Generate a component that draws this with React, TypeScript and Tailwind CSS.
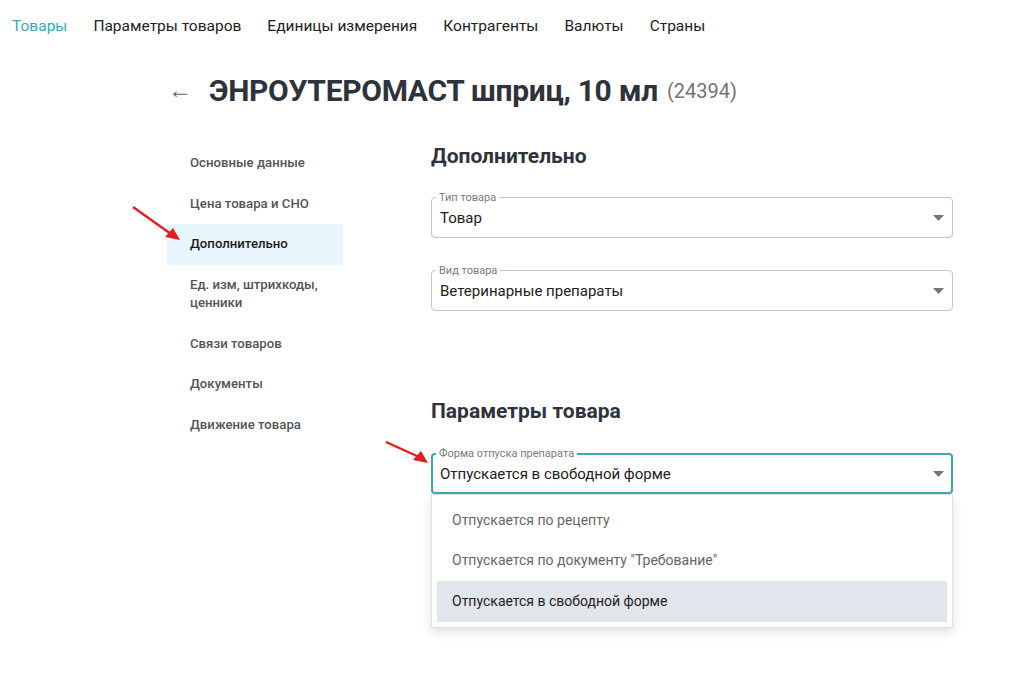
import { useState } from "react";

const tabs = ["Товары", "Параметры товаров", "Единицы измерения", "Контрагенты", "Валюты", "Страны"];

const sections = [
  "Основные данные",
  "Цена товара и СНО",
  "Дополнительно",
  "Ед. изм, штрихкоды, ценники",
  "Связи товаров",
  "Документы",
  "Движение товара",
];

const options = [
  "Отпускается по рецепту",
  'Отпускается по документу "Требование"',
  "Отпускается в свободной форме",
];

function Caret() {
  return (
    <svg width="11" height="6" viewBox="0 0 11 6" className="shrink-0">
      <path d="M0 0h11L5.5 6z" fill="#757575" />
    </svg>
  );
}

function SelectField({
  label,
  value,
  focused,
}: {
  label: string;
  value: string;
  focused?: boolean;
}) {
  return (
    <div
      className={`relative flex h-[41px] items-center justify-between rounded-[4px] ${
        focused ? "border-2 border-[#3aa9b7] pl-[7px] pr-[7px]" : "border border-[#c6c6c6] pl-[8px] pr-[8px]"
      }`}
    >
      <span
        className={`absolute bg-white px-[3px] text-[11px] leading-[12px] text-[#7a7a7a] ${
          focused ? "-top-[7px] left-[3px]" : "-top-[6px] left-[4px]"
        }`}
      >
        {label}
      </span>
      <span className="mt-[2px] text-[15px] text-[#222]">{value}</span>
      <Caret />
    </div>
  );
}

function RedArrow({ w, h, className }: { w: number; h: number; className: string }) {
  return (
    <svg
      width={w}
      height={h}
      viewBox={`0 0 ${w} ${h}`}
      className={`pointer-events-none absolute ${className}`}
    >
      <line x1="1" y1="1" x2={w - 9} y2={h - 6} stroke="#e41e1e" strokeWidth="2.4" />
      <path
        d={`M${w} ${h} L${w - 15} ${h - 3} L${w - 7} ${h - 12} Z`}
        fill="#e41e1e"
      />
    </svg>
  );
}

export default function App() {
  const [active, setActive] = useState(2);
  const [open, setOpen] = useState(true);

  return (
    <div
      className="relative h-[685px] w-[1025px] overflow-hidden bg-white"
      style={{ fontFamily: "Roboto, 'Liberation Sans', sans-serif" }}
    >
      {/* Tabs */}
      <nav className="flex h-[54px] items-center gap-[26px] px-[12px] text-[15.5px]">
        {tabs.map((t, i) => (
          <span key={t} className={i === 0 ? "text-[#3aa7b8]" : "text-[#222]"}>
            {t}
          </span>
        ))}
      </nav>

      {/* Title */}
      <div className="mt-[18px] flex h-[36px] items-center pl-[168px]">
        <span className="mr-[17px] text-[24px] leading-none text-[#666]">←</span>
        <h1 className="text-[30px] font-bold tracking-[-0.3px] text-[#2e333b]">
          ЭНРОУТЕРОМАСТ шприц, 10 мл
        </h1>
        <span className="ml-[9px] mt-[2px] text-[20px] text-[#737373]">(24394)</span>
      </div>

      <div className="mt-[35px] flex pl-[167px]">
        {/* Side menu */}
        <ul className="w-[176px] shrink-0">
          {sections.map((s, i) => (
            <li
              key={s}
              onClick={() => setActive(i)}
              className={`cursor-pointer py-[11px] pl-[23px] pr-[14px] text-[13.2px] font-medium leading-[18.5px] ${
                i === active ? "bg-[#e9f5fc] text-[#1d1d1d]" : "text-[#555]"
              }`}
            >
              {s}
            </li>
          ))}
        </ul>

        {/* Content */}
        <div className="-mt-[1px] ml-[88px] w-[522px]">
          <h2 className="text-[21px] font-bold leading-[28px] text-[#2e333b]">Дополнительно</h2>
          <div className="mt-[27px]">
            <SelectField label="Тип товара" value="Товар" />
          </div>
          <div className="mt-[32px]">
            <SelectField label="Вид товара" value="Ветеринарные препараты" />
          </div>

          <h2 className="mt-[86px] text-[21px] font-bold leading-[28px] text-[#2e333b]">
            Параметры товара
          </h2>
          <div className="relative mt-[28px]" onClick={() => setOpen(!open)}>
            <SelectField
              label="Форма отпуска препарата"
              value="Отпускается в свободной форме"
              focused
            />
            {open && (
              <ul className="absolute left-0 right-0 top-[41px] z-10 border border-[#e0e0e0] bg-white p-[5px] shadow-[0_4px_10px_rgba(0,0,0,0.12)]">
                {options.map((o, i) => (
                  <li
                    key={o}
                    className={`flex h-[40.5px] items-center pl-[15px] text-[14px] ${
                      i === 2 ? "bg-[#e3e5ed] text-[#222]" : "text-[#666]"
                    }`}
                  >
                    {o}
                  </li>
                ))}
              </ul>
            )}
          </div>
        </div>
      </div>

      <RedArrow w={48} h={34} className="left-[132px] top-[206px]" />
      <RedArrow w={43} h={22} className="left-[385px] top-[441px]" />
    </div>
  );
}
